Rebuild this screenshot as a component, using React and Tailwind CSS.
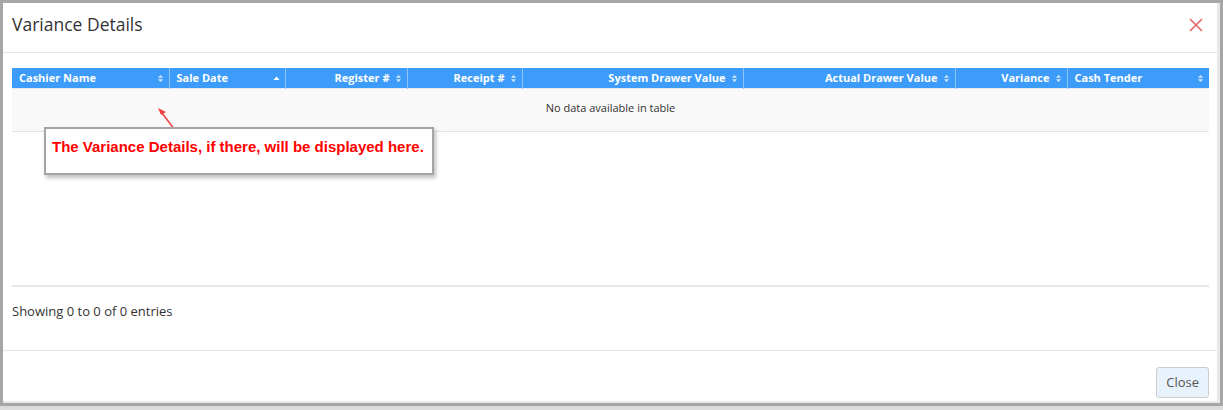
import React from 'react';

const columns = [
  { name: 'Cashier Name', width: 157, align: 'left', sort: 'both' },
  { name: 'Sale Date', width: 116, align: 'left', sort: 'asc' },
  { name: 'Register #', width: 122, align: 'right', sort: 'both' },
  { name: 'Receipt #', width: 115, align: 'right', sort: 'both' },
  { name: 'System Drawer Value', width: 221, align: 'right', sort: 'both' },
  { name: 'Actual Drawer Value', width: 212, align: 'right', sort: 'both' },
  { name: 'Variance', width: 112, align: 'right', sort: 'both' },
  { name: 'Cash Tender', width: 142, align: 'left', sort: 'both' },
];

const SortIcon = ({ type }) => (
  <svg width="7" height="9" viewBox="0 0 7 9" className="shrink-0">
    {type === 'asc' ? (
      <path d="M0.5 6 L3.5 2.5 L6.5 6 Z" fill="#ffffff" />
    ) : (
      <>
        <path d="M1 3.8 L3.5 1 L6 3.8 Z" fill="#d6e8fb" />
        <path d="M1 5.2 L3.5 8 L6 5.2 Z" fill="#d6e8fb" />
      </>
    )}
  </svg>
);

const HeaderCell = ({ col, last }) => (
  <th
    style={{ width: col.width }}
    className={`h-[20px] p-0 font-bold text-[11px] text-white ${last ? '' : 'border-r border-[#8cc3fa]'}`}
  >
    <div className="flex items-center h-[20px] pl-[7px] pr-[5px]">
      {col.align === 'left' ? (
        <>
          <span className="flex-1 text-left">{col.name}</span>
          <SortIcon type={col.sort} />
        </>
      ) : (
        <>
          <span className="flex-1 text-right pr-[5px]">{col.name}</span>
          <SortIcon type={col.sort} />
        </>
      )}
    </div>
  </th>
);

export default function App() {
  return (
    <div className="w-[1223px] h-[410px] bg-[#dcdcdc] overflow-hidden" style={{ fontFamily: '"Open Sans", sans-serif' }}>
      <div className="h-[406px] border-[3px] border-[#a6a6a6] bg-[#e9e9e9]">
        <div className="relative h-[398px] mr-[3px] bg-white flex flex-col">
          {/* header */}
          <div className="h-[50px] flex items-center justify-between pl-[9px] pr-[13px] pb-[5px] border-b border-[#e5e5e5]">
            <h1 className="text-[17.5px] text-[#333333] leading-none">Variance Details</h1>
            <svg width="16" height="16" viewBox="0 0 16 16">
              <path d="M2 2 L14 14 M14 2 L2 14" stroke="#e06666" strokeWidth="1.6" />
            </svg>
          </div>

          {/* body */}
          <div className="flex-1 pl-[9px] pr-[8px] pt-[15px] flex flex-col">
            <table className="border-collapse table-fixed w-[1197px]">
              <thead>
                <tr className="bg-[#3d9cf9]">
                  {columns.map((c, i) => (
                    <HeaderCell key={c.name} col={c} last={i === columns.length - 1} />
                  ))}
                </tr>
              </thead>
              <tbody>
                <tr className="bg-[#f9f9f9] border-b border-[#e4e4e4] border-t border-t-[#e7ecf3]">
                  <td colSpan={8} className="h-[43px] pb-[4px] text-center text-[11px] text-[#333333]">
                    No data available in table
                  </td>
                </tr>
              </tbody>
            </table>
            <div className="mt-[153px] border-t-2 border-[#e6e6e6] w-[1197px]" />
            <div className="h-[48px] pt-[2px] flex items-center text-[13px] text-[#333333]">
              Showing 0 to 0 of 0 entries
            </div>
          </div>

          {/* footer */}
          <div className="h-[51px] border-t border-[#e5e5e5] flex items-start justify-end pr-[8px] pt-[16px]">
            <button className="h-[31px] px-[9px] text-[13px] text-[#555555] bg-[#e8f2fc] border border-[#cccccc] rounded-[3px]">
              Close
            </button>
          </div>

          {/* annotation */}
          <svg className="absolute left-[150px] top-[102px]" width="30" height="32" viewBox="0 0 30 32">
            <path d="M25 29 L9 8" stroke="#f04040" strokeWidth="1.5" />
            <path d="M5 3 L13 7 L8 10 Z" fill="#f04040" />
          </svg>
          <div className="absolute left-[41px] top-[124px] w-[390px] h-[48px] bg-white border-2 border-[#a5a5a5] shadow-[2px_3px_4px_rgba(0,0,0,0.25)] pl-[6px] pt-[5px]">
            <span className="text-[15px] font-bold text-[#ff0000]" style={{ fontFamily: '"Liberation Sans", Arial, sans-serif' }}>
              The Variance Details, if there, will be displayed here.
            </span>
          </div>
        </div>
      </div>
    </div>
  );
}
